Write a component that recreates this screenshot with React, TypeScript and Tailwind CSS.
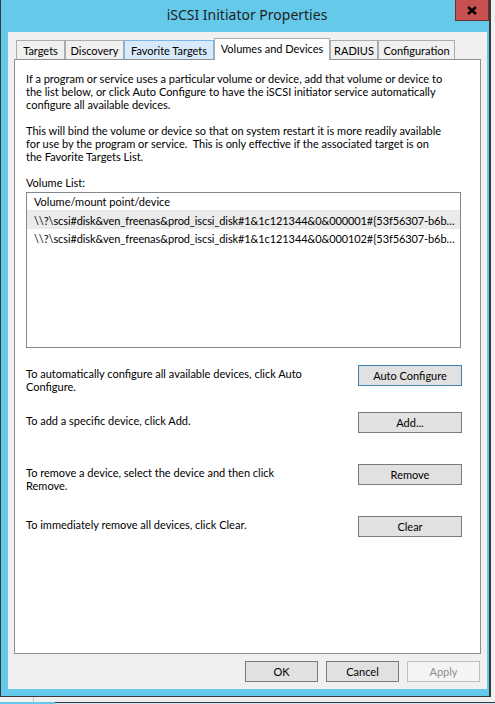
import React from "react";

// iSCSI Initiator Properties - Volumes and Devices tab

const tabs = [
  { label: "Targets", w: "w-[49px]" },
  { label: "Discovery", w: "w-[59px]" },
  { label: "Favorite Targets", w: "w-[90px]", hover: true },
  { label: "Volumes and Devices", w: "w-[116px]", active: true },
  { label: "RADIUS", w: "w-[48px]" },
  { label: "Configuration", w: "w-[77px]" },
];

const volumes = [
  "\\\\?\\scsi#disk&ven_freenas&prod_iscsi_disk#1&1c121344&0&000001#{53f56307-b6b",
  "\\\\?\\scsi#disk&ven_freenas&prod_iscsi_disk#1&1c121344&0&000102#{53f56307-b6b",
];

const Tab = ({ label, w, active, hover }: { label: string; w: string; active?: boolean; hover?: boolean }) => {
  if (active) {
    return (
      <div
        className={`${w} h-[22px] -mb-px relative z-10 bg-white border border-b-0 border-[#acacac] flex items-start justify-center pt-[3px]`}
      >
        {label}
      </div>
    );
  }
  return (
    <div
      className={`${w} h-[19px] border border-b-0 flex items-center justify-center ${
        hover ? "bg-[#d8eaf9] border-[#7eb4ea]" : "bg-[#f0f0f0] border-[#acacac]"
      }`}
    >
      {label}
    </div>
  );
};

const Btn = ({
  children,
  className = "",
  focused,
  disabled,
}: {
  children: React.ReactNode;
  className?: string;
  focused?: boolean;
  disabled?: boolean;
}) => (
  <div
    className={`h-[21px] shrink-0 flex items-center justify-center border ${
      disabled
        ? "bg-[#f4f4f4] border-[#bfbfbf] text-[#8d8d8d]"
        : focused
        ? "bg-[#e1e1e1] border-[#3c7fb1]"
        : "bg-[#e1e1e1] border-[#7a7a7a]"
    } ${className}`}
  >
    {children}
  </div>
);

// rows keep the button height; a second line of text hangs below
const ActionRow = ({ text, button, focused, className = "" }: { text: React.ReactNode; button: string; focused?: boolean; className?: string }) => (
  <div className={`h-[21px] flex justify-between items-start pr-[18px] ${className}`}>
    <p className="pt-[2px]">{text}</p>
    <Btn className="w-[104px]" focused={focused}>
      {button}
    </Btn>
  </div>
);

export default function App() {
  return (
    <div className="w-[495px] h-[704px] bg-[#f0f0f0] overflow-hidden font-['Lato',sans-serif] text-[11px] leading-[13px] text-black">
      {/* window */}
      <div className="w-[491px] h-[697px] bg-[#65c9ea] border-l border-r-2 border-b border-[#3a3a3a] flex flex-col">
        {/* title bar */}
        <div className="h-[32px] grid grid-cols-[1fr_auto_1fr]">
          <div />
          <div className="self-center pl-[4px] font-['Noto_Sans',sans-serif] text-[14px] leading-[18px] text-[#1f1f1f] pb-[2px]">
            iSCSI Initiator Properties
          </div>
          <div className="flex justify-end items-start">
            <div className="w-[34px] h-[21px] bg-[#c75050] border border-t-0 border-[#6b3030] flex items-center justify-center">
              <svg width="10" height="9" viewBox="0 0 10 9">
                <path d="M1 1 L9 8 M9 1 L1 8" stroke="#000" strokeWidth="2.4" />
              </svg>
            </div>
          </div>
        </div>

        {/* client area */}
        <div className="ml-[7px] mr-[2px] h-[657px] bg-[#f0f0f0] pt-[6px] flex flex-col">
          <div className="flex items-end pl-[8px] h-[21px]">
            {tabs.map((t) => (
              <Tab key={t.label} {...t} />
            ))}
          </div>

          <div className="ml-[6px] w-[467px] h-[595px] bg-white border border-[#8f8f8f] pl-[11px] pt-[12px] flex flex-col">
            <p className="mb-[13px]">
              If a program or service uses a particular volume or device, add that volume or device to
              <br />
              the list below, or click Auto Configure to have the iSCSI initiator service automatically
              <br />
              configure all available devices.
            </p>
            <p className="mb-[13px]">
              This will bind the volume or device so that on system restart it is more readily available
              <br />
              for use by the program or service.&nbsp; This is only effective if the associated target is on
              <br />
              the Favorite Targets List.
            </p>
            <p>Volume List:</p>

            {/* list box */}
            <div className="mt-[3px] w-[435px] h-[156px] border border-[#828790] flex flex-col overflow-hidden">
              <div className="h-[18px] border-b border-[#e5e5e5] pl-[7px] flex items-center">Volume/mount point/device</div>
              {volumes.map((v, i) => (
                <div
                  key={v}
                  className={`h-[18px] pl-[7px] pr-[4px] flex items-center tracking-[-0.1px] ${i === 0 ? "bg-[#ebebeb]" : ""}`}
                >
                  <span className="whitespace-nowrap">{v}…</span>
                </div>
              ))}
            </div>

            <ActionRow
              className="mt-[17px]"
              text={
                <>
                  To automatically configure all available devices, click Auto
                  <br />
                  Configure.
                </>
              }
              button="Auto Configure"
              focused
            />
            <ActionRow className="mt-[26px]" text="To add a specific device, click Add." button="Add..." />
            <ActionRow
              className="mt-[31px]"
              text={
                <>
                  To remove a device, select the device and then click
                  <br />
                  Remove.
                </>
              }
              button="Remove"
            />
            <ActionRow className="mt-[31px]" text="To immediately remove all devices, click Clear." button="Clear" />
          </div>

          <div className="mt-[7px] pr-[7px] flex justify-end gap-[8px]">
            <Btn className="w-[73px]">OK</Btn>
            <Btn className="w-[73px]">Cancel</Btn>
            <Btn className="w-[73px]" disabled>
              Apply
            </Btn>
          </div>
        </div>
      </div>

      {/* background behind the window */}
      <div className="h-[5px] flex">
        <div className="w-[33px]" />
        <div className="w-px bg-[#c8c8c8]" />
      </div>
      <div className="h-[2px] flex">
        <div className="w-[55px] bg-[#65c9ea]" />
        <div className="flex-1 bg-[#cfe6f3] border-t border-[#3a3a3a]" />
      </div>
    </div>
  );
}
